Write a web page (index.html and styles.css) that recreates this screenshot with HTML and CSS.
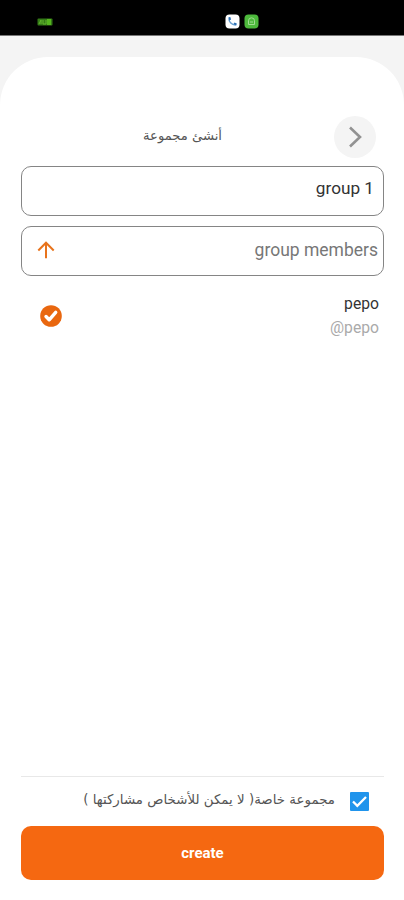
FILE: index.html
```html
<!DOCTYPE html>
<html lang="ar">
<head>
<meta charset="utf-8">
<title>أنشئ مجموعة</title>
<link rel="stylesheet" href="styles.css">
</head>
<body>
<div class="status">
  <svg class="battery" width="17" height="8" viewBox="0 0 17 8"><rect x=".5" y=".5" width="15" height="7" rx="1" fill="#347a17"/><path d="M2 6l2-4v4M6 2v4h3V2M11 1v6" fill="none" stroke="#62b52e"/><rect x="10" y="1" width="4" height="6" fill="#55b51e"/></svg>
  <svg class="app" width="15" height="15" viewBox="0 0 15 15"><rect x=".5" y=".5" width="14" height="14" rx="4" fill="#fff"/><path d="M4 4.200c-.3 3.800 2.800 7 6.800 6.700" fill="none" stroke="#6aa0d0" stroke-width="1.500"/><path d="M3.400 3.200l1.900-.3.800 2.500-1.700 1.100zM8.500 10l1-1.500 2.300 1-.5 2z" fill="#2c70b5"/></svg>
  <svg class="app" width="15" height="15" viewBox="0 0 15 15"><rect x=".5" y=".5" width="14" height="14" rx="4" fill="#4db93c"/><path d="M4.500 10.500V6.800a3 3 0 0 1 6 0v3.700zM6 8h3" fill="none" stroke="#a0dc92"/></svg>
</div>
<main class="sheet">
  <header class="header">
    <h1 class="title" dir="rtl">أنشئ مجموعة</h1>
    <button class="back" aria-label="رجوع"><svg width="42" height="42" viewBox="0 0 42 42"><path d="M16 11.500l10 9.500-10 9.500" fill="none" stroke="#929292" stroke-width="2.600"/></svg></button>
  </header>
  <div class="field name">group 1</div>
  <div class="field members">
    <svg width="18" height="18" viewBox="0 0 18 18"><path d="M9 17.200V2M1.300 9.500L9 1.700l7.700 7.800" fill="none" stroke="#e8731c" stroke-width="2"/></svg>
    <span>group members</span>
  </div>
  <div class="person">
    <svg width="22" height="22" viewBox="0 0 22 22"><circle cx="11" cy="11" r="10.800" fill="#e9670f"/><path d="M6 11.500l3.200 3.300 6.500-7.500" fill="none" stroke="#fff" stroke-width="3.400" stroke-linecap="round" stroke-linejoin="round"/></svg>
    <div class="who"><div>pepo</div><div class="handle">@pepo</div></div>
  </div>
  <footer class="footer">
    <div class="private">
      <span class="label" dir="rtl">مجموعة خاصة( لا يمكن للأشخاص مشاركتها )</span>
      <svg width="19" height="19" viewBox="0 0 19 19"><rect width="19" height="19" rx="1" fill="#2094ec"/><path d="M3 9.500l4.300 4.300L16 5" fill="none" stroke="#fff" stroke-width="2.300"/></svg>
    </div>
    <button class="create">create</button>
  </footer>
</main>
</body>
</html>
```
FILE: styles.css
```css
* { box-sizing: border-box; }
body {
  margin: 0;
  height: 900px;
  display: flex;
  flex-direction: column;
  background: #f4f4f4;
  font-family: Roboto, "DejaVu Sans", sans-serif;
  overflow: hidden;
}
svg { display: block; flex: none; }
button { border: 0; padding: 0; font: inherit; }
.status {
  height: 36px;
  flex: none;
  display: flex;
  align-items: flex-start;
  gap: 4px;
  padding: 14px 0 0 37px;
  background: #000;
  border-bottom: 1px solid #777;
}
.battery { margin: 4px 167px 0 0; }
.sheet {
  flex: 1;
  margin-top: 21px;
  padding: 59px 20px 20px 21px;
  display: flex;
  flex-direction: column;
  background: #fff;
  border-radius: 48px 48px 0 0;
}
.header {
  height: 42px;
  display: flex;
  align-items: center;
  justify-content: flex-end;
}
.title {
  margin: 0 112px 3px 0;
  font: 13.15px/20px "DejaVu Sans", sans-serif;
  color: #555;
  white-space: nowrap;
}
.back {
  width: 42px;
  height: 42px;
  margin-right: 8px;
  border-radius: 50%;
  background: #f4f4f4;
}
.field {
  height: 50px;
  display: flex;
  align-items: center;
  border: 1px solid #858585;
  border-radius: 10px;
  font-size: 17.5px;
}
.name {
  margin-top: 8px;
  padding: 0 9px 7px 0;
  justify-content: flex-end;
  color: #333;
  font-size: 17.2px;
}
.members {
  margin-top: 10px;
  padding: 0 5px 2px 15px;
  justify-content: space-between;
  color: #777;
}
.person {
  margin-top: 16px;
  padding: 0 5px 0 19px;
  display: flex;
  align-items: center;
  justify-content: space-between;
  font-size: 15.7px;
  line-height: 24px;
  color: #333;
  text-align: right;
}
.handle { color: #aaa; }
.footer { margin-top: auto; border-top: 1px solid #e8e8e8; }
.private {
  height: 49px;
  padding-right: 15px;
  display: flex;
  align-items: center;
  justify-content: flex-end;
  gap: 15px;
}
.label {
  margin-bottom: 3px;
  font: 13.4px/20px "DejaVu Sans", sans-serif;
  color: #555;
  white-space: nowrap;
}
.create {
  display: block;
  width: 100%;
  height: 54px;
  border-radius: 10px;
  background: #f56811;
  color: #fff;
  font-size: 15px;
  font-weight: 700;
}
```
